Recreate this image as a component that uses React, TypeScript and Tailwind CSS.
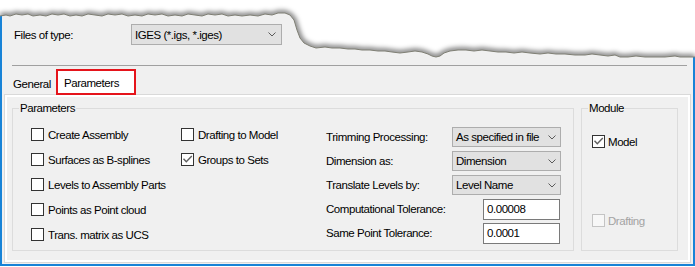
import type { ReactNode } from "react";

const edge: Array<[number, number]> = [
  [0, 16], [6, 15], [10, 16], [16, 14], [22, 15], [28, 14], [33, 16], [40, 15], [46, 16], [52, 14],
  [58, 15], [64, 14], [70, 16], [76, 15], [82, 16], [88, 14], [95, 15], [102, 16], [108, 14], [115, 15],
  [122, 14], [128, 16], [135, 15], [142, 16], [148, 14], [155, 15], [162, 14], [168, 16], [175, 15],
  [182, 16], [188, 14], [195, 15], [202, 16], [208, 14], [215, 15], [222, 14], [228, 16], [235, 15],
  [242, 16], [250, 15], [258, 16], [265, 14], [272, 15], [278, 13], [285, 13], [290, 15], [294, 20],
  [297, 30], [300, 38], [304, 43], [310, 46], [316, 48], [325, 47], [332, 48], [340, 48], [348, 49],
  [355, 49], [362, 50], [370, 50], [378, 51], [385, 51], [392, 52], [400, 53], [408, 52], [415, 51],
  [422, 52], [428, 54], [432, 56], [436, 57], [440, 56], [444, 53], [450, 51], [458, 50], [466, 50],
  [474, 51], [482, 50], [490, 51], [498, 52], [506, 52], [514, 53], [522, 52], [530, 53], [540, 54],
  [548, 53], [556, 54], [565, 54], [575, 55], [585, 55], [592, 54], [600, 55], [608, 56], [615, 55],
  [620, 57], [628, 57], [636, 56], [645, 57], [655, 57], [665, 57], [675, 56], [680, 57], [688, 57],
  [695, 57],
];

const edgeLine = edge.map(([x, y]) => `${x},${y}`).join(" L");
const paperShape = `M0,0 L${edgeLine} L695,0 Z`;

function TornEdge() {
  return (
    <svg className="pointer-events-none absolute left-0 top-0" width="695" height="64" viewBox="0 0 695 64">
      <defs>
        <clipPath id="above">
          <path d={paperShape} />
        </clipPath>
        <filter id="soft" x="-5%" y="-50%" width="110%" height="200%">
          <feGaussianBlur stdDeviation="2.4" />
        </filter>
      </defs>
      <path d={paperShape} fill="#ffffff" />
      <g clipPath="url(#above)">
        <path d={`M${edgeLine}`} fill="none" stroke="#000" strokeOpacity="0.55" strokeWidth="5" filter="url(#soft)" />
      </g>
      <path d={`M${edgeLine}`} fill="none" stroke="#7f7f74" strokeWidth="1" />
    </svg>
  );
}

function Chevron() {
  return (
    <svg width="8" height="5" viewBox="0 0 8 5" className="shrink-0">
      <path d="M0.5 0.5 L4 4 L7.5 0.5" fill="none" stroke="#5a5a5a" strokeWidth="1" />
    </svg>
  );
}

function Select({ value, className = "" }: { value: string; className?: string }) {
  return (
    <div className={`flex items-center justify-between border border-[#adadad] bg-[#e1e1e1] pl-[3px] pr-[4px] ${className}`}>
      <span className="whitespace-nowrap">{value}</span>
      <Chevron />
    </div>
  );
}

function Box({ checked, disabled }: { checked?: boolean; disabled?: boolean }) {
  return (
    <span
      className={`flex h-[13px] w-[13px] shrink-0 border ${
        disabled ? "border-[#c4c4c4] bg-[#f7f7f7]" : "border-[#333333] bg-white"
      }`}
    >
      {checked ? (
        <svg width="11" height="11" viewBox="0 0 11 11">
          <path d="M1.5 4.8 L4.3 7.8 L9.8 2" fill="none" stroke="#5f5f5f" strokeWidth="1.4" />
        </svg>
      ) : null}
    </span>
  );
}

function Check({ label, checked, disabled, gap = "gap-[4px]" }: { label: string; checked?: boolean; disabled?: boolean; gap?: string }) {
  return (
    <div className={`flex h-[25px] items-center ${gap} ${disabled ? "text-[#a3a3a3]" : ""}`}>
      <Box checked={checked} disabled={disabled} />
      <span className="whitespace-nowrap">{label}</span>
    </div>
  );
}

function Group({ title, className, children }: { title: string; className: string; children: ReactNode }) {
  return (
    <fieldset className={`border border-[#dcdcdc] ${className}`}>
      <legend className="ml-[6px] px-[1px] leading-[14px]">{title}</legend>
      {children}
    </fieldset>
  );
}

function ValueRow({ label, children }: { label: string; children: ReactNode }) {
  return (
    <div className="flex h-[24px] items-center justify-between">
      <span className="whitespace-nowrap">{label}</span>
      {children}
    </div>
  );
}

export default function App() {
  return (
    <div className="relative h-[267px] w-[695px] overflow-hidden bg-white font-['Liberation_Sans',Arial,sans-serif] text-[11.5px] leading-[14px] tracking-[-0.45px] text-black">
      <div className="flex h-[266px] w-[695px] flex-col border-x-2 border-b-2 border-[#1883d7] bg-[#f0f0f0]">
        <div className="mt-[24px] flex h-[21px] items-center pl-[12px]">
          <span className="w-[117px]">Files of type:</span>
          <Select value="IGES (*.igs, *.iges)" className="h-[21px] w-[151px] pr-[5px]" />
        </div>

        <div className="ml-[10px] mr-[6px] mt-[20px] border-t border-[#a0a0a0]" />

        <div className="mt-[3px] flex h-[25px] items-start pl-[6px]">
          <div className="flex h-[26px] w-[48px] items-center justify-center pt-[3px]">General</div>
          <div className="relative z-10 flex h-[26px] w-[80px] items-center border-2 border-[#e5141b] bg-white pl-[6px] pt-[2px]">
            Parameters
          </div>
        </div>

        <div className="mx-[2px] mb-[1px] flex flex-1 border border-[#d9d9d9]">
          <div className="flex flex-1 gap-[7px] border-2 border-white bg-[#f0f0f0] pb-[9px] pl-[5px] pr-[10px] pt-[4px]">
            <Group title="Parameters" className="w-[562px]">
              <div className="flex">
                <div className="w-[168px] pl-[18px] pt-[7px]">
                  <Check label="Create Assembly" />
                  <Check label="Surfaces as B-splines" />
                  <Check label="Levels to Assembly Parts" />
                  <Check label="Points as Point cloud" />
                  <Check label="Trans. matrix as UCS" />
                </div>
                <div className="w-[145px] pt-[7px]">
                  <Check label="Drafting to Model" />
                  <Check label="Groups to Sets" checked />
                </div>
                <div className="w-[235px] pt-[10px]">
                  <ValueRow label="Trimming Processing:">
                    <Select value="As specified in file" className="h-[20px] w-[109px]" />
                  </ValueRow>
                  <ValueRow label="Dimension as:">
                    <Select value="Dimension" className="h-[20px] w-[109px]" />
                  </ValueRow>
                  <ValueRow label="Translate Levels by:">
                    <Select value="Level Name" className="h-[20px] w-[109px]" />
                  </ValueRow>
                  <ValueRow label="Computational Tolerance:">
                    <div className="mr-[1px] flex h-[21px] w-[77px] items-center border border-[#7a7a7a] bg-white pl-[3px]">0.00008</div>
                  </ValueRow>
                  <ValueRow label="Same Point Tolerance:">
                    <div className="mr-[1px] flex h-[21px] w-[77px] items-center border border-[#7a7a7a] bg-white pl-[3px]">0.0001</div>
                  </ValueRow>
                </div>
              </div>
            </Group>

            <Group title="Module" className="w-[97px]">
              <div className="pl-[10px]">
                <div className="mt-[14px]">
                  <Check label="Model" checked gap="gap-[3px]" />
                </div>
                <div className="mt-[54px]">
                  <Check label="Drafting" disabled gap="gap-[3px]" />
                </div>
              </div>
            </Group>
          </div>
        </div>
      </div>
      <TornEdge />
    </div>
  );
}
